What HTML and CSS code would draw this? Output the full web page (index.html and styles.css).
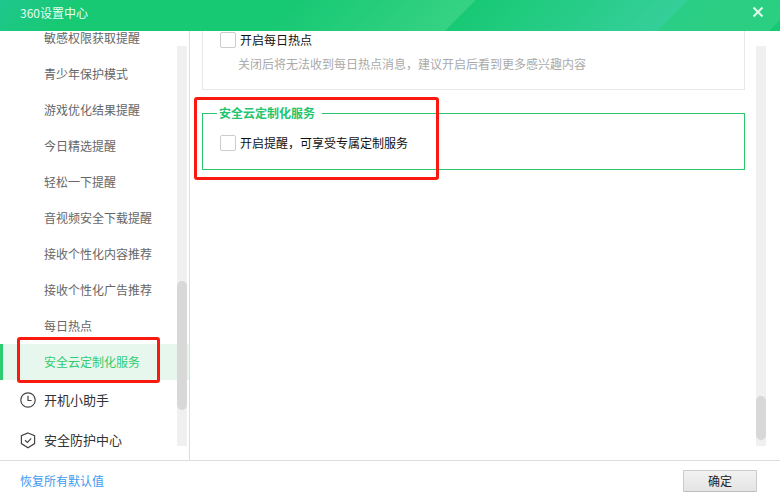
FILE: index.html
```html
<!DOCTYPE html>
<html lang="zh-CN">
<head>
  <meta charset="UTF-8">
  <title>360设置中心</title>
  <link rel="stylesheet" href="styles.css">
</head>
<body>

<div class="window">
  <div class="titlebar">
    <span class="title">360设置中心</span>
    <svg class="close" width="12" height="12" viewBox="0 0 12 12">
      <path d="M1.5 1.5 L10.5 10.5 M10.5 1.5 L1.5 10.5" />
    </svg>
  </div>

  <div class="main">
    <div class="sidebar">
      <ul class="nav">
        <li>敏感权限获取提醒</li>
        <li>青少年保护模式</li>
        <li>游戏优化结果提醒</li>
        <li>今日精选提醒</li>
        <li>轻松一下提醒</li>
        <li>音视频安全下载提醒</li>
        <li>接收个性化内容推荐</li>
        <li>接收个性化广告推荐</li>
        <li>每日热点</li>
        <li class="active">安全云定制化服务</li>
      </ul>
      <div class="group">
        <svg width="16" height="16" viewBox="0 0 16 16">
          <circle cx="8" cy="8" r="7.2" />
          <path d="M8 3.8 V8.5 H11.6" />
        </svg>
        <span>开机小助手</span>
      </div>
      <div class="group">
        <svg width="16" height="17" viewBox="0 0 16 17">
          <path d="M8 1 L14.6 3.6 V11.6 L8 15.8 L1.4 11.6 V3.6 Z" />
          <path d="M5 8.2 L7.4 10.4 L11.2 6.4" />
        </svg>
        <span>安全防护中心</span>
      </div>
      <div class="scrollbar"><div class="thumb thumb-nav"></div></div>
    </div>

    <div class="content">
      <div class="section-cut">
        <label class="check"><span class="box"></span>开启每日热点</label>
        <p class="hint">关闭后将无法收到每日热点消息，建议开启后看到更多感兴趣内容</p>
      </div>

      <fieldset class="section-green">
        <legend>安全云定制化服务</legend>
        <label class="check"><span class="box"></span>开启提醒，可享受专属定制服务</label>
      </fieldset>

      <div class="scrollbar scrollbar-right"><div class="thumb thumb-content"></div></div>
    </div>
  </div>

  <div class="footer">
    <a class="reset" href="#">恢复所有默认值</a>
    <button class="ok">确定</button>
  </div>

  <div class="mark mark-nav"></div>
  <div class="mark mark-section"></div>
</div>

</body>
</html>
```

FILE: styles.css
```css
* {
  box-sizing: border-box;
  font-family: "Noto Sans CJK SC", "Liberation Sans", sans-serif;
}

body {
  margin: 0;
  background: #ffffff;
}

.window {
  position: relative;
  width: 780px;
  height: 500px;
  overflow: hidden;
  display: flex;
  flex-direction: column;
}

.titlebar {
  height: 31px;
  flex: none;
  display: flex;
  align-items: center;
  justify-content: space-between;
  padding: 0 16px 0 20px;
  color: #e6fff2;
  background: linear-gradient(135deg,
    #1fc78d 0, #18c974 57px, #18c974 212px, #35d283 336px,
    #18c974 337px, #35cf9a 486px, #2bce86 487px, #2bcf80 565px, #18c974 566px);
}

.title {
  font-size: 12px;
  line-height: 16px;
  margin-bottom: 5px;
}

.close {
  display: block;
  margin-bottom: 7px;
}

.close path {
  stroke: #e2f9ec;
  stroke-width: 2;
  fill: none;
}

.main {
  flex: 1;
  display: flex;
  min-height: 0;
}

.sidebar {
  position: relative;
  width: 190px;
  flex: none;
  border-right: 1px solid #dddddd;
}

.nav {
  list-style: none;
  margin: 0;
  padding: 0;
}

.nav li {
  height: 36px;
  line-height: 36px;
  padding-left: 44px;
  font-size: 12px;
  color: #666666;
}

/* first row is scrolled partly under the title bar */
.nav li:first-child {
  height: 25px;
  line-height: 14px;
}

.nav li.active {
  color: #2ecc71;
  background: #e8f7ee;
  border-left: 3px solid #2ecc71;
  padding-left: 41px;
}

.group {
  height: 40px;
  display: flex;
  align-items: center;
  gap: 8px;
  padding-left: 20px;
  font-size: 13px;
  color: #333333;
}

.group span {
  margin-bottom: 2px;
}

.group svg {
  flex: none;
}

.group svg * {
  fill: none;
  stroke: #444444;
  stroke-width: 1.2;
}

.scrollbar {
  position: absolute;
  top: 15px;
  left: 177px;
  width: 10px;
  height: 400px;
  background: #f0f0f0;
}

.scrollbar-right {
  left: 566px;
}

.thumb {
  position: absolute;
  left: 0;
  width: 10px;
  background: #d8d8d8;
  border-radius: 5px;
}

.thumb-nav {
  top: 235px;
  height: 129px;
}

.thumb-content {
  top: 350px;
  height: 44px;
}

.content {
  position: relative;
  flex: 1;
  overflow: hidden;
  padding-left: 12px;
}

.section-cut {
  width: 543px;
  height: 59px;
  border: 1px solid #e8e8e8;
  border-top: none;
  padding-left: 17px;
  padding-top: 1px;
}

.check {
  display: flex;
  align-items: flex-start;
  gap: 4px;
  height: 16px;
  font-size: 12px;
  line-height: 16px;
  color: #111111;
}

.box {
  width: 16px;
  height: 16px;
  flex: none;
  background: #ffffff;
  border: 1px solid #cccccc;
  border-radius: 2px;
}

.hint {
  margin: 8px 0 0 18px;
  font-size: 12px;
  line-height: 16px;
  color: #aaaaaa;
}

.section-green {
  width: 543px;
  height: 65px;
  margin: 15px 0 0 0;
  padding: 0 0 0 17px;
  border: 1px solid #2bc56c;
  min-width: 0;
}

.section-green legend {
  margin-left: -3px;
  padding: 0 7px 0 2px;
  font-size: 12px;
  font-weight: 700;
  line-height: 16px;
  color: #22c66f;
}

.section-green .check {
  margin-top: 14px;
}

.footer {
  height: 40px;
  flex: none;
  display: flex;
  align-items: center;
  justify-content: space-between;
  padding: 0 23px 0 20px;
  border-top: 1px solid #dddddd;
}

.reset {
  font-size: 12px;
  color: #3b9cf0;
  text-decoration: none;
}

.ok {
  width: 74px;
  height: 22px;
  padding: 0;
  font-size: 12px;
  line-height: 20px;
  color: #222222;
  background: linear-gradient(#f2f2f2, #e4e4e4);
  border: 1px solid #cccccc;
  border-bottom-color: #bdbdbd;
  border-radius: 1px;
}

.mark {
  position: absolute;
  border: 3px solid #fb1a10;
  border-radius: 3px;
  pointer-events: none;
}

.mark-nav {
  left: 17px;
  top: 337px;
  width: 143px;
  height: 46px;
}

.mark-section {
  left: 194px;
  top: 97px;
  width: 245px;
  height: 83px;
}
```
